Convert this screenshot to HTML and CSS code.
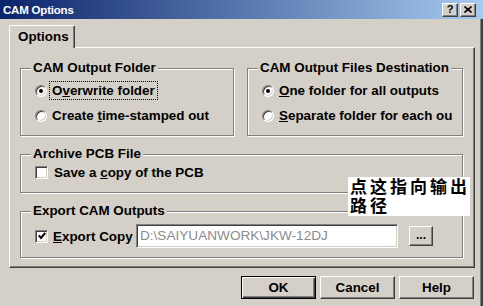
FILE: index.html
```html
<!DOCTYPE html>
<html>
<head>
<meta charset="utf-8">
<link rel="stylesheet" href="styles.css">
</head>
<body>
<div class="window">
  <div class="titlebar">
    <span class="title">CAM Options</span>
    <div class="caption-btns">
      <span class="cbtn help">?</span>
      <span class="cbtn close"><svg width="8" height="7" viewBox="0 0 8 7"><path d="M0.5 0.5 L7.5 6.5 M7.5 0.5 L0.5 6.5" stroke="#000" stroke-width="1.6" fill="none"/></svg></span>
    </div>
  </div>
  <div class="main">
    <div class="tabs"><div class="tab">Options</div></div>
    <div class="panel">
      <div class="row2">
        <div class="group g1">
          <div class="legend">CAM Output Folder</div>
          <div class="opt first"><span class="radio on"></span><span class="lbl focus">O<u>v</u>erwrite folder</span></div>
          <div class="opt"><span class="radio"></span><span class="lbl">Create <u>t</u>ime-stamped out</span></div>
        </div>
        <div class="group g2">
          <div class="legend">CAM Output Files Destination</div>
          <div class="opt first"><span class="radio on"></span><span class="lbl"><u>O</u>ne folder for all outputs</span></div>
          <div class="opt"><span class="radio"></span><span class="lbl"><u>S</u>eparate folder for each ou</span></div>
        </div>
      </div>
      <div class="group g3">
        <div class="legend">Archive PCB File</div>
        <div class="chkrow"><span class="check"></span><span class="lbl">Save a <u>c</u>opy of the PCB</span></div>
      </div>
      <div class="group g4">
        <div class="legend">Export CAM Outputs</div>
        <div class="exportrow">
          <span class="check on"><svg width="8" height="8" viewBox="0 0 8 8"><path d="M0.8 3.4 L3 6 L7.2 1" stroke="#000" stroke-width="2" fill="none"/></svg></span>
          <span class="lbl exp"><u>E</u>xport Copy</span>
          <span class="textbox">D:\SAIYUANWORK\JKW-12DJ</span>
          <span class="btn browse">...</span>
        </div>
      </div>
    </div>
    <div class="buttons">
      <span class="btn dlg default">OK</span>
      <span class="btn dlg">Cancel</span>
      <span class="btn dlg">Help</span>
    </div>
  </div>
  <div class="note"><div class="nline">点这指向输出</div><div class="nline">路径</div></div>
</div>
</body>
</html>
```

FILE: styles.css
```css
* { box-sizing: border-box; }
body {
  margin: 0;
  font-family: "Liberation Sans", Arial, sans-serif;
  background: #d4d0c8;
}
.window {
  width: 483px;
  height: 306px;
  position: relative;
  background: #d4d0c8;
  overflow: hidden;
}
.titlebar {
  height: 19px;
  background: linear-gradient(to right, #0a246a, #a6caf0);
  display: flex;
  align-items: center;
  justify-content: space-between;
  padding: 0 7px 0 3px;
}
.title {
  color: #fff;
  font-weight: bold;
  font-size: 11.5px;
  letter-spacing: -0.2px;
}
.caption-btns {
  display: flex;
  gap: 2px;
}
.cbtn {
  width: 16px;
  height: 14px;
  background: #d4d0c8;
  border: 1px solid;
  border-color: #fff #404040 #404040 #fff;
  box-shadow: inset -1px -1px 0 #808080;
  display: flex;
  align-items: center;
  justify-content: center;
  font-weight: bold;
  font-size: 11px;
  line-height: 1;
  color: #000;
}
.main {
  height: 287px;
  padding: 6px 8px 0 9px;
  box-shadow: inset -2px 0 0 #404040, inset -3px 0 0 #808080;
}
.tabs { display: flex; }
.tab {
  width: 66px;
  height: 23px;
  margin-bottom: -1px;
  position: relative;
  z-index: 1;
  background: #d4d0c8;
  border-top: 1px solid #fff;
  border-left: 1px solid #fff;
  border-right: 1px solid #404040;
  border-radius: 2px 2px 0 0;
  box-shadow: inset -1px 0 0 #808080;
  padding-left: 8px;
  font-weight: bold;
  font-size: 13.4px;
  line-height: 21px;
}
.panel {
  width: 466px;
  border-top: 1px solid #fff;
  border-left: 1px solid #fff;
  border-right: 1px solid #404040;
  border-bottom: 1px solid #404040;
  box-shadow: inset -1px -1px 0 #808080;
  padding: 20px 11px 9px 10px;
  font-weight: bold;
  font-size: 13.4px;
  color: #000;
}
.row2 {
  display: flex;
  gap: 13px;
}
.group {
  border: 1px solid #808080;
  box-shadow: inset 1px 1px 0 #fff, 1px 1px 0 #fff;
}
.g1 { width: 214px; padding-bottom: 7px; }
.g2 { width: 216px; padding-bottom: 7px; }
.g3 { margin-top: 18px; padding-bottom: 9px; }
.g4 { margin-top: 18px; padding-bottom: 9px; }
.legend {
  width: fit-content;
  margin: -9px 0 0 10px;
  padding: 0 2px;
  line-height: 16px;
  height: 16px;
  background: #d4d0c8;
  white-space: nowrap;
}
.opt {
  display: flex;
  align-items: center;
  height: 25px;
  padding-left: 14px;
  white-space: nowrap;
}
.opt.first { margin-top: 2px; }
.lbl { margin-left: 5px; }
.focus {
  outline: 1px dotted #000;
  outline-offset: 1px;
  padding: 0 1px;
  margin-left: 4px;
}
.radio {
  width: 12px;
  height: 12px;
  flex: none;
  border-radius: 50%;
  background: #fff;
  border: 1px solid;
  border-color: #808080 #fff #fff #808080;
  box-shadow: inset 1px 1px 0 #404040, inset -1px -1px 0 #d4d0c8;
  display: flex;
  align-items: center;
  justify-content: center;
}
.radio.on::after {
  content: "";
  width: 4px;
  height: 4px;
  border-radius: 50%;
  background: #000;
}
.chkrow {
  display: flex;
  align-items: center;
  height: 21px;
  padding-left: 14px;
}
.check {
  width: 13px;
  height: 13px;
  flex: none;
  background: #fff;
  border: 1px solid;
  border-color: #808080 #fff #fff #808080;
  box-shadow: inset 1px 1px 0 #404040, inset -1px -1px 0 #d4d0c8;
  display: flex;
  align-items: center;
  justify-content: center;
}
.chkrow .lbl { margin-left: 6px; }
.exportrow {
  display: flex;
  align-items: center;
  height: 24px;
  margin-top: 5px;
  padding-left: 14px;
}
.exp {
  width: 83px;
  flex: none;
  white-space: nowrap;
}
.textbox {
  width: 262px;
  height: 24px;
  flex: none;
  background: #fff;
  border: 1px solid;
  border-color: #808080 #fff #fff #808080;
  box-shadow: inset 1px 1px 0 #404040, inset -1px -1px 0 #d4d0c8;
  padding-left: 3px;
  font-weight: normal;
  font-size: 13.6px;
  line-height: 22px;
  color: #8c8c8c;
  white-space: nowrap;
}
.btn {
  background: #d4d0c8;
  border: 1px solid;
  border-color: #fff #404040 #404040 #fff;
  box-shadow: inset -1px -1px 0 #808080;
  display: flex;
  align-items: center;
  justify-content: center;
  font-weight: bold;
  color: #000;
}
.browse {
  width: 24px;
  height: 20px;
  margin-left: 11px;
  font-size: 12px;
  line-height: 1;
  padding-bottom: 3px;
}
.buttons {
  display: flex;
  justify-content: flex-end;
  gap: 4px;
  margin-top: 8px;
  padding-right: 1px;
}
.dlg {
  width: 75px;
  height: 23px;
  font-size: 13.4px;
}
.dlg.default {
  border: 1px solid #000;
  box-shadow: inset 1px 1px 0 #fff, inset -1px -1px 0 #404040, inset -2px -2px 0 #808080;
}
.note {
  position: absolute;
  left: 348px;
  top: 177px;
  width: 122px;
  height: 39px;
  background: #fff;
  padding: 1px 0 0 2px;
  font-family: "Liberation Sans", "Noto Sans CJK SC", sans-serif;
  font-weight: bold;
  font-size: 17px;
  color: #000;
  white-space: nowrap;
}
.nline {
  height: 19px;
  line-height: 19px;
  letter-spacing: 3px;
}
```
